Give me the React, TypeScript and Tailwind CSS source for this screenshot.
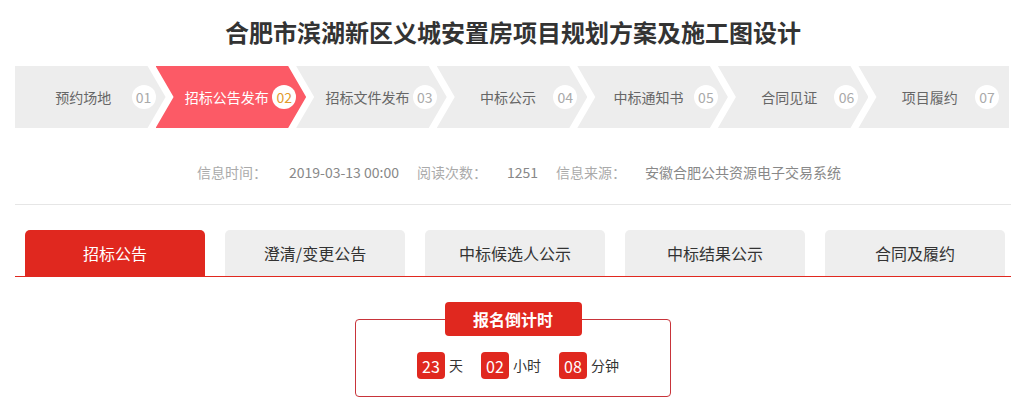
import React from 'react';

const steps = ['预约场地', '招标公告发布', '招标文件发布', '中标公示', '中标通知书', '合同见证', '项目履约'];
const tabs = ['招标公告', '澄清/变更公告', '中标候选人公示', '中标结果公示', '合同及履约'];

const CLIP_FIRST = '[clip-path:polygon(0_0,calc(100%_-_18px)_0,100%_50%,calc(100%_-_18px)_100%,0_100%)]';
const CLIP_MID = '[clip-path:polygon(0_0,calc(100%_-_18px)_0,100%_50%,calc(100%_-_18px)_100%,0_100%,18px_50%)]';
const CLIP_LAST = '[clip-path:polygon(0_0,100%_0,100%_100%,0_100%,18px_50%)]';

function Steps({ active }: { active: number }) {
  return (
    <div className="flex h-[62px]">
      {steps.map((label, i) => {
        const isActive = i === active;
        const clip = i === 0 ? CLIP_FIRST : i === steps.length - 1 ? CLIP_LAST : CLIP_MID;
        return (
          <div
            key={label}
            className={`min-w-0 flex-1 ${i === 0 ? '' : '-ml-[10px]'} ${clip} ${isActive ? 'bg-[#fc5a66]' : 'bg-[#ededed]'}`}
          >
            <div className={`flex h-full items-center pr-[10px] ${i === 0 ? 'pl-[20px]' : 'pl-[26px]'}`}>
              <span className={`flex-1 text-center text-[14px] whitespace-nowrap ${isActive ? 'text-white' : 'text-[#666]'}`}>
                {label}
              </span>
              <span
                className={`flex h-[24px] w-[24px] shrink-0 items-center justify-center rounded-full bg-white text-[14px] ${
                  isActive ? 'text-[#e39a2d]' : 'text-[#aaa]'
                }`}
              >
                {String(i + 1).padStart(2, '0')}
              </span>
            </div>
          </div>
        );
      })}
    </div>
  );
}

function Countdown() {
  const items = [
    { n: '23', unit: '天' },
    { n: '02', unit: '小时' },
    { n: '08', unit: '分钟' },
  ];
  return (
    <div className="mt-[25px] flex flex-col items-center">
      <div className="relative z-10 flex h-[34px] w-[137px] items-center justify-center rounded-[4px] bg-[#e0281f] text-[16px] font-bold text-white">
        报名倒计时
      </div>
      <div className="-mt-[17px] flex h-[78px] w-[316px] items-start justify-center gap-[18px] rounded-[4px] border border-[#c8343a] pt-[32px] pl-[10px]">
        {items.map((it) => (
          <div key={it.unit} className="flex items-center gap-[4px]">
            <span className="flex h-[27px] w-[28px] items-center justify-center rounded-[4px] bg-[#e0281f] text-[16px] text-white">
              {it.n}
            </span>
            <span className="text-[14px] text-[#333]">{it.unit}</span>
          </div>
        ))}
      </div>
    </div>
  );
}

export default function App() {
  return (
    <div className="w-[1026px] bg-white px-[15px] pt-[16px] font-['Microsoft_YaHei','Noto_Sans_CJK_SC',sans-serif]">
      <h1 className="text-center text-[24px] leading-[32px] font-bold text-[#333]">
        合肥市滨湖新区义城安置房项目规划方案及施工图设计
      </h1>

      <div className="mt-[18px] pr-[2px]">
        <Steps active={1} />
      </div>

      {/* 信息 */}
      <div className="mt-[34px] flex h-[20px] items-center justify-center pl-[12px] text-[14px] leading-[20px] whitespace-nowrap">
        <span className="text-[#aaa]">信息时间：</span>
        <span className="ml-[22px] text-[#888]">2019-03-13 00:00</span>
        <span className="ml-[18px] text-[#aaa]">阅读次数：</span>
        <span className="ml-[20px] text-[#888]">1251</span>
        <span className="ml-[18px] text-[#aaa]">信息来源：</span>
        <span className="ml-[19px] text-[#888]">安徽合肥公共资源电子交易系统</span>
      </div>

      <div className="mt-[22px] h-px bg-[#e6e6e6]" />

      {/* Tabs */}
      <div className="mt-[25px] flex gap-[20px] border-b border-[#e0281f] pl-[10px]">
        {tabs.map((t, i) => (
          <div
            key={t}
            className={`flex h-[46px] w-[180px] items-center justify-center rounded-t-[5px] text-[16px] ${
              i === 0 ? 'bg-[#e0281f] text-white' : 'bg-[#eeeeee] text-[#333]'
            }`}
          >
            {t}
          </div>
        ))}
      </div>

      <Countdown />
      <div className="h-[10px]" />
    </div>
  );
}
